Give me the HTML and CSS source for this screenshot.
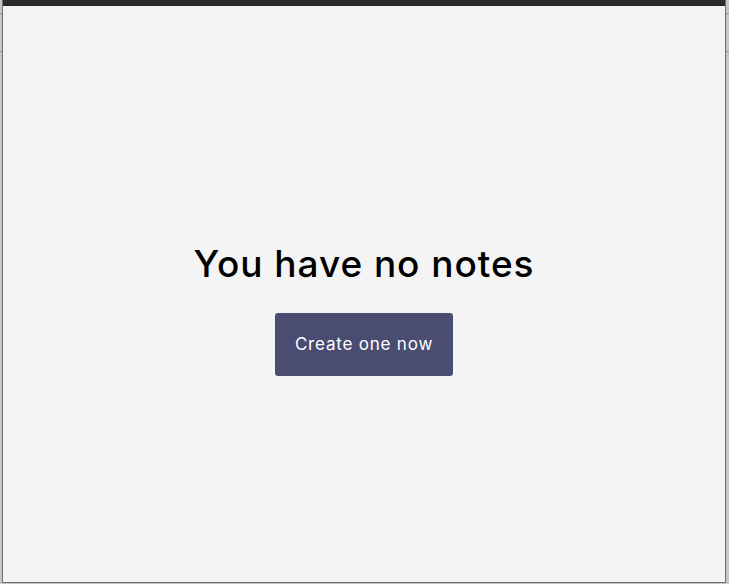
FILE: index.html
```html
<!DOCTYPE html>
<html lang="en">
<head>
<meta charset="utf-8">
<title>Notes</title>
<link rel="stylesheet" href="styles.css">
</head>
<body>
<div class="window">
  <div class="topbar"></div>
  <main class="empty">
    <h1 class="empty-title">You have no notes</h1>
    <button class="btn-create" type="button">Create one now</button>
  </main>
</div>
</body>
</html>
```
FILE: styles.css
```css
html, body {
  margin: 0;
  padding: 0;
  height: 100%;
}
body {
  background-color: #c6c6c6;
  background-image:
    linear-gradient(#9a9a9a, #9a9a9a),
    linear-gradient(#9a9a9a, #9a9a9a);
  background-size: 100% 1px, 100% 1px;
  background-position: 0 13px, 0 51px;
  background-repeat: no-repeat;
  font-family: Inter, "Open Sans", sans-serif;
  padding: 0 3px 1px 2px;
  box-sizing: border-box;
}
.window {
  height: 100%;
  box-sizing: border-box;
  border: 1px solid #6e6e6e;
  border-top: 0;
  background: #f4f4f4;
  display: flex;
  flex-direction: column;
}
.topbar {
  height: 6px;
  background: #2b2b2b;
  flex: none;
}
.empty {
  flex: 1;
  display: flex;
  flex-direction: column;
  align-items: center;
  justify-content: center;
  padding-top: 30px;
}
.empty-title {
  margin: 0 0 28px;
  font-size: 37px;
  font-weight: 550;
  letter-spacing: 0.95px;
  color: #000;
  line-height: 42px;
}
.btn-create {
  width: 178px;
  height: 63px;
  border: 0;
  border-radius: 3px;
  background: #4a4c72;
  color: #fff;
  font-family: inherit;
  font-size: 17px;
  font-weight: 400;
  letter-spacing: 0.8px;
  padding: 0 0 1px;
}
```
